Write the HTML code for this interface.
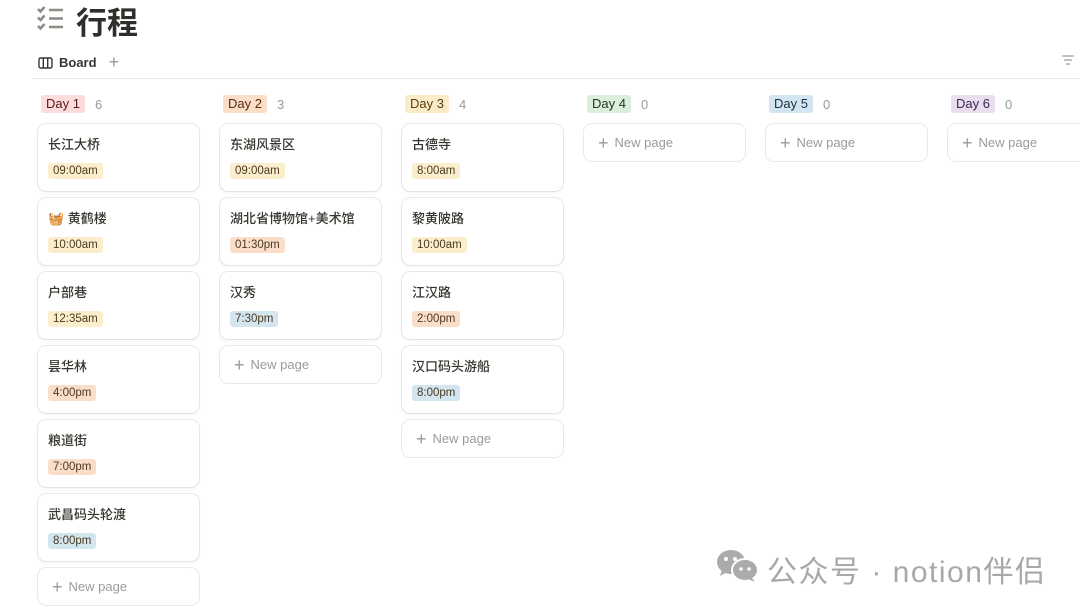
<!DOCTYPE html>
<html><head><meta charset="utf-8"><style>
*{box-sizing:border-box;margin:0;padding:0}
body{width:1080px;height:610px;overflow:hidden;background:#fff;font-family:"Liberation Sans","Noto Sans CJK SC",sans-serif;color:#37352f;position:relative}
.title{position:absolute;left:76px;top:-2px;font-size:31px;font-weight:bold;color:#2f2e2b;font-family:"Liberation Sans","Noto Sans CJK SC",sans-serif}
.tabs{position:absolute;left:38px;top:52px;font-size:13px;font-weight:600;display:flex;align-items:center}
.line{position:absolute;left:32px;right:0;top:78px;height:1px;background:#e9e9e7}
.col{position:absolute;top:95px;width:162px}
.hd{height:18px;display:flex;align-items:center;font-size:13px;margin-left:3px}
.pill{padding:0 5px;border-radius:3px;height:18px;line-height:18px}
.cnt{margin-left:10px;color:#9b9a97}
.card{position:absolute;left:0;width:161px;height:67px;border-radius:8px;box-shadow:0 0 0 1px rgba(15,15,15,.09),0 2px 4px rgba(15,15,15,.04);background:#fff}
.card .t{position:absolute;left:10px;top:10px;font-size:13px;font-weight:500}
.card .tm{position:absolute;left:10px;top:39px;height:16px;line-height:16px;padding:0 5px;border-radius:3px;font-size:11.5px;color:#4a3a20}
.np{position:absolute;left:0;width:161px;height:37px;border-radius:8px;box-shadow:0 0 0 1px rgba(15,15,15,.09);font-size:13px;color:#9b9a97;line-height:37px;padding-left:14px}
.np b{font-weight:300;font-size:18px;margin-right:6px;vertical-align:-2px}
.y{background:#fbeecc}.o{background:#fadec9}.b{background:#d3e5ef}
</style></head><body>
<svg style="position:absolute;left:37px;top:6px" width="27" height="25" viewBox="0 0 27 25" fill="none" stroke="#8e8b85" stroke-width="2.6"><path d="M1 3l2.5 2.5 4-4.5M1 11.5l2.5 2.5 4-4.5M1 20l2.5 2.5 4-4.5"/><path d="M12 4h14M12 12.5h14M12 21h14"/></svg>
<div class="title">行程</div>
<div class="tabs"><svg width="15" height="12" viewBox="0 0 15 12" fill="none" stroke="#37352f" stroke-width="1.4" style="margin-right:6px"><rect x="1" y="1" width="13" height="10" rx="1.5"/><path d="M5.3 1v10M9.7 1v10"/></svg>Board<span style="margin-left:12px;color:#9b9a97;font-weight:300;font-size:18px">+</span></div>
<svg style="position:absolute;left:1062px;top:55px" width="12" height="10" viewBox="0 0 12 10" stroke="#9b9a97" stroke-width="1.2"><path d="M0 1h12M2 5h8M4 9h4"/></svg>
<div class="line"></div>

<div class="col" style="left:38px"><div class="hd"><span class="pill" style="background:#fbdcdc;color:#5d1715">Day 1</span><span class="cnt">6</span></div>
<div class="card" style="top:29px"><div class="t">长江大桥</div><div class="tm y">09:00am</div></div>
<div class="card" style="top:103px"><div class="t">🧺 黄鹤楼</div><div class="tm y">10:00am</div></div>
<div class="card" style="top:177px"><div class="t">户部巷</div><div class="tm y">12:35am</div></div>
<div class="card" style="top:251px"><div class="t">昙华林</div><div class="tm o">4:00pm</div></div>
<div class="card" style="top:325px"><div class="t">粮道街</div><div class="tm o">7:00pm</div></div>
<div class="card" style="top:399px"><div class="t">武昌码头轮渡</div><div class="tm b">8:00pm</div></div>
<div class="np" style="top:473px"><b>+</b>New page</div></div>

<div class="col" style="left:220px"><div class="hd"><span class="pill" style="background:#fadec9;color:#5c2a0e">Day 2</span><span class="cnt">3</span></div>
<div class="card" style="top:29px"><div class="t">东湖风景区</div><div class="tm y">09:00am</div></div>
<div class="card" style="top:103px"><div class="t">湖北省博物馆+美术馆</div><div class="tm o">01:30pm</div></div>
<div class="card" style="top:177px"><div class="t">汉秀</div><div class="tm b">7:30pm</div></div>
<div class="np" style="top:251px"><b>+</b>New page</div></div>

<div class="col" style="left:402px"><div class="hd"><span class="pill" style="background:#fbecc8;color:#5a3e10">Day 3</span><span class="cnt">4</span></div>
<div class="card" style="top:29px"><div class="t">古德寺</div><div class="tm y">8:00am</div></div>
<div class="card" style="top:103px"><div class="t">黎黄陂路</div><div class="tm y">10:00am</div></div>
<div class="card" style="top:177px"><div class="t">江汉路</div><div class="tm o">2:00pm</div></div>
<div class="card" style="top:251px"><div class="t">汉口码头游船</div><div class="tm b">8:00pm</div></div>
<div class="np" style="top:325px"><b>+</b>New page</div></div>

<div class="col" style="left:584px"><div class="hd"><span class="pill" style="background:#dbeddb;color:#1c3829">Day 4</span><span class="cnt">0</span></div>
<div class="np" style="top:29px"><b>+</b>New page</div></div>
<div class="col" style="left:766px"><div class="hd"><span class="pill" style="background:#d3e5ef;color:#183347">Day 5</span><span class="cnt">0</span></div>
<div class="np" style="top:29px"><b>+</b>New page</div></div>
<div class="col" style="left:948px"><div class="hd"><span class="pill" style="background:#e8deee;color:#412454">Day 6</span><span class="cnt">0</span></div>
<div class="np" style="top:29px"><b>+</b>New page</div></div>

<svg style="position:absolute;left:716px;top:549px" width="44" height="34" viewBox="0 0 44 34"><ellipse cx="15" cy="13" rx="14" ry="12" fill="#ababab"/><path d="M6 21l-2 6 7-4z" fill="#ababab"/><ellipse cx="29" cy="21" rx="13" ry="11" fill="#ababab" stroke="#fff" stroke-width="2"/><path d="M36 29l3 4-7-3z" fill="#ababab"/><circle cx="10" cy="10" r="2" fill="#fff"/><circle cx="19" cy="10" r="2" fill="#fff"/><circle cx="25" cy="20" r="1.7" fill="#fff"/><circle cx="33" cy="20" r="1.7" fill="#fff"/></svg>
<div style="position:absolute;left:767px;top:547px;font-size:30px;color:#a8a8a8;letter-spacing:1.5px;font-family:'Liberation Sans','Noto Sans CJK SC',sans-serif">公众号 · notion伴侣</div>
</body></html>
